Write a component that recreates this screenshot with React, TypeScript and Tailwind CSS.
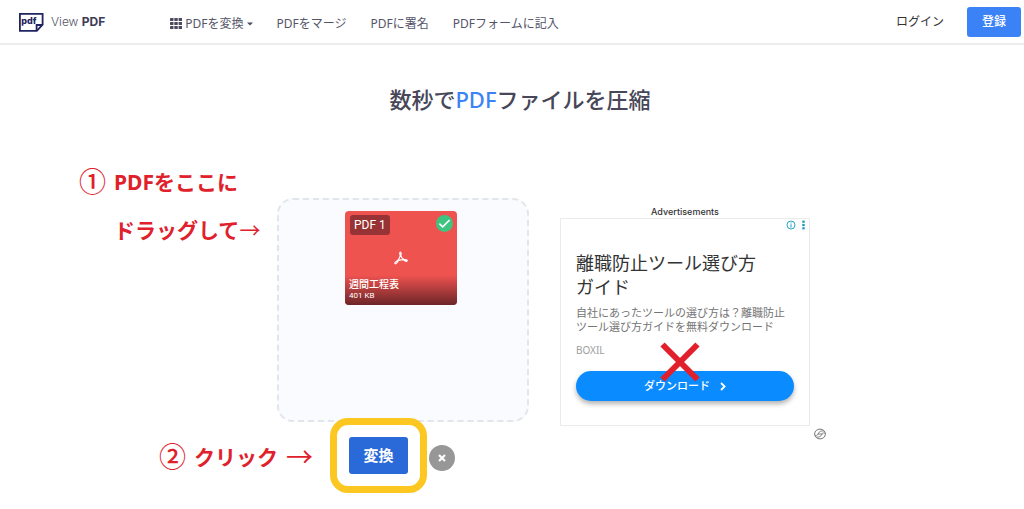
import React from "react";

const navLinks = ["PDFをマージ", "PDFに署名", "PDFフォームに記入"];

const LogoIcon = () => (
  <svg width="26" height="20" viewBox="0 0 26 20" fill="none" aria-hidden="true">
    <path d="M1.9 1.9H24.6V12.6L18.8 18.8H1.9Z" stroke="#1f2560" strokeWidth="1.8" />
    <path d="M18.6 18.6V13H24.4" stroke="#1f2560" strokeWidth="1.8" />
    <text x="3.2" y="12.4" fontSize="9" fontWeight="800" fontFamily="Inter, sans-serif" fill="#1f2560">
      pdf
    </text>
  </svg>
);

const GridIcon = () => (
  <svg width="12" height="11" viewBox="0 0 12 11" fill="#4b4a5e" aria-hidden="true">
    {[0, 4, 8].map((y) =>
      [0, 4.3, 8.6].map((x) => (
        <rect key={`${x}-${y}`} x={x} y={y} width="3.5" height="3" rx="0.4" />
      ))
    )}
  </svg>
);

const AcrobatIcon = () => (
  <svg width="14" height="14" viewBox="0 0 14 14" fill="none" stroke="#fff" strokeWidth="1.2" aria-hidden="true">
    <path
      strokeLinejoin="round"
      d="M6.4 1C5.5 1 5.5 2.8 6.3 4.6C5.7 7 4.2 9.4 2.6 10.3C1 11.1.5 12 1.1 12.6C1.9 13.3 3.3 11.6 4.1 9.8C6 9 8 8.7 9.4 8.7C10.8 10.1 12.6 10.8 13.1 10C13.5 9.1 12.2 8.4 9.8 8.6C8.5 7.6 7.2 6 6.8 4.6C7.3 2.8 7.2 1 6.4 1Z"
    />
  </svg>
);

const CheckIcon = () => (
  <svg width="17" height="17" viewBox="0 0 17 17" fill="none" role="img" aria-label="完了">
    <circle cx="8.5" cy="8.5" r="8.5" fill="#3fc380" />
    <path d="M3.4 8.6L6.7 11.8L13.6 5" stroke="#fff" strokeWidth="1.6" />
  </svg>
);

const InfoIcon = () => (
  <svg width="10" height="10" viewBox="0 0 10 10" fill="none" aria-hidden="true">
    <circle cx="5" cy="5" r="4" stroke="#27a9c4" />
    <path d="M5 4.3V7.5M5 2.4V3.5" stroke="#27a9c4" strokeWidth="1.1" />
  </svg>
);

const DotsIcon = () => (
  <svg width="3" height="10" viewBox="0 0 3 10" fill="#1c9ab8" aria-hidden="true">
    <rect x="0.3" y="0.6" width="2.4" height="2.2" />
    <rect x="0.3" y="3.9" width="2.4" height="2.2" />
    <rect x="0.3" y="7.2" width="2.4" height="2.2" />
  </svg>
);

const ProviderIcon = () => (
  <svg width="12" height="12" viewBox="0 0 12 12" fill="none" stroke="#777" aria-hidden="true">
    <ellipse cx="6" cy="6" rx="5.4" ry="4.9" strokeWidth="1" />
    <path d="M1.2 7.4C3.6 7.6 4.2 6.6 4.6 5.2C5 3.6 6.8 2.6 9.8 3" strokeWidth="0.9" />
    <path d="M2.4 9C5.2 9.4 7 8.4 7.4 6.8C7.8 5.4 8.8 4.8 11 5M3.6 6H8.6" strokeWidth="0.9" />
  </svg>
);

const Header: React.FC = () => (
  <header className="flex h-[45px] items-center border-b-2 border-[#ececec] pl-[18px] pr-[3px] text-xs">
    <a href="#" className="flex items-center gap-[7px] font-['Inter',sans-serif] text-[#55556a]">
      <LogoIcon />
      <span className="font-light">
        View <b className="font-bold text-[#3d3d55]">PDF</b>
      </span>
    </a>
    <nav className="ml-[65px] mt-1 flex items-center gap-6 text-[#55556a]">
      <button type="button" className="flex items-center gap-[3px]">
        <GridIcon />
        PDFを変換
        <svg width="6" height="4" viewBox="0 0 6 4" fill="#4b4a5e" aria-hidden="true">
          <path d="M0 0.5H6L3 3.5Z" />
        </svg>
      </button>
      {navLinks.map((label) => (
        <a key={label} href="#">
          {label}
        </a>
      ))}
    </nav>
    <div className="ml-auto flex items-center gap-[23px]">
      <a href="#" className="text-[#333]">
        ログイン
      </a>
      <button type="button" className="h-[30px] w-[54px] rounded-[3px] bg-[#3b82f6] font-medium text-white">
        登録
      </button>
    </div>
  </header>
);

const Notes: React.FC = () => (
  <div className="flex w-[277px] shrink-0 flex-col text-[21px] font-bold leading-[48px] text-[#e0212b]">
    <div className="flex gap-2 pl-[79px]">
      <span className="text-[27px] font-medium">①</span>
      <p className="whitespace-nowrap">
        PDFをここに
        <br />
        ドラッグして<span className="font-normal">→</span>
      </p>
    </div>
    <div className="mt-[179px] flex gap-2 pl-[159px]">
      <span className="text-[27px] font-medium">②</span>
      <p className="flex gap-2 whitespace-nowrap">
        クリック<span className="text-[27px] font-normal">→</span>
      </p>
    </div>
  </div>
);

const Uploader: React.FC = () => (
  <section className="flex w-[252px] shrink-0 flex-col pt-[40px]">
    <div className="h-[224px] rounded-2xl border-2 border-dashed border-[#e2e5ea] bg-[#f9fbfe] pr-1 pt-[11px]">
      <div className="mx-auto flex h-[94px] w-[112px] flex-col overflow-hidden rounded bg-[#ef5350] font-['Roboto','Noto_Sans_CJK_JP',sans-serif] text-white">
        <div className="flex items-start justify-between pl-[5px] pr-1 pt-1">
          <span className="h-5 rounded-[3px] bg-[#983335] px-1 text-xs leading-5">PDF 1</span>
          <CheckIcon />
        </div>
        <div className="mt-4 flex justify-center">
          <AcrobatIcon />
        </div>
        <div className="mt-auto bg-linear-to-b from-transparent to-[#6d2528] px-1 pb-1 pt-1 text-[8px] leading-[10px]">
          <p className="text-[10px] font-medium leading-3">週間工程表</p>
          <p>401 KB</p>
        </div>
      </div>
    </div>
    <div className="-mt-1 flex items-center gap-[2px] pl-[53px]">
      <div className="rounded-[18px] border-[7px] border-[#fbc720] bg-white px-3 py-3">
        <button type="button" className="h-[37px] w-[59px] rounded-[3px] bg-[#2a69d8] text-[15px] font-bold text-white">
          変換
        </button>
      </div>
      <button
        type="button"
        aria-label="削除"
        className="mt-1 flex size-[26px] items-center justify-center rounded-full bg-[#979797]"
      >
        <svg width="8" height="8" viewBox="0 0 8 8" stroke="#fff" strokeWidth="2.2">
          <path d="M1 1L7 7M7 1L1 7" />
        </svg>
      </button>
    </div>
  </section>
);

const Ad: React.FC = () => (
  <aside className="ml-[31px] flex w-[266px] shrink-0 flex-col pt-[47px]">
    <p className="w-[250px] text-center font-['Inter',sans-serif] text-[9px] font-medium leading-[13px] text-[#333]">
      Advertisements
    </p>
    <div className="relative h-[208px] w-[250px] border border-[#ebebeb] px-[15px]">
      <div className="-mr-[11px] flex h-3 items-center justify-end gap-[6px]">
        <InfoIcon />
        <DotsIcon />
      </div>
      <h2 className="mt-5 text-lg leading-6 text-[#333]">
        離職防止ツール選び方
        <br />
        ガイド
      </h2>
      <p className="mt-[7px] whitespace-nowrap text-[11px] leading-[14px] text-[#757575]">
        自社にあったツールの選び方は？離職防止
        <br />
        ツール選び方ガイドを無料ダウンロード
      </p>
      <p className="mt-2 text-[10px] leading-4 text-[#9e9e9e]">BOXIL</p>
      <a
        href="#"
        className="mt-[13px] flex h-[30px] items-center justify-center gap-[10px] rounded-full bg-[#0a8bff] text-[11px] font-medium text-white shadow-[0_3px_5px_rgba(0,0,0,0.3)]"
      >
        ダウンロード
        <svg width="6" height="9" viewBox="0 0 6 9" fill="none" stroke="#fff" strokeWidth="1.8" aria-hidden="true">
          <path d="M1 1L4.6 4.5L1 8" />
        </svg>
      </a>
      <svg
        className="absolute left-[99px] top-[123px]"
        width="40"
        height="40"
        viewBox="0 0 40 40"
        stroke="#e0212b"
        strokeWidth="6"
        aria-hidden="true"
      >
        <path d="M2.5 2.5L37.5 37.5M37.5 2.5L2.5 37.5" />
      </svg>
    </div>
    <div className="mt-[2px] flex justify-end">
      <ProviderIcon />
    </div>
  </aside>
);

export default function App() {
  return (
    <div className="min-h-screen bg-white font-['Noto_Sans','Noto_Sans_CJK_JP',sans-serif]">
      <Header />
      <main>
        <h1 className="pl-4 pt-[38px] text-center text-[22px] font-medium leading-8 text-[#474759]">
          数秒で<span className="text-[#3b82f6]">PDF</span>ファイルを圧縮
        </h1>
        <div className="mt-[43px] flex">
          <Notes />
          <Uploader />
          <Ad />
        </div>
      </main>
    </div>
  );
}
